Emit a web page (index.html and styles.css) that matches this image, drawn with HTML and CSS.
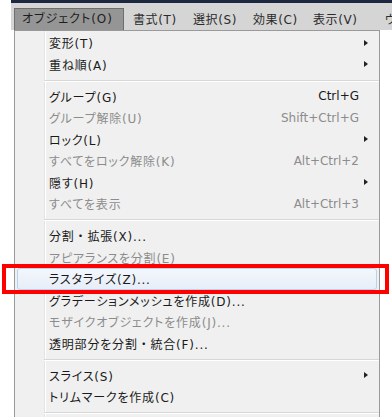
FILE: index.html
```html
<!DOCTYPE html>
<html lang="ja">
<head>
    <meta charset="utf-8">
    <title>オブジェクト メニュー</title>
    <link rel="stylesheet" href="styles.css">
</head>
<body>
    <div class="title_strip"></div>

    <!-- Menu bar -->
    <nav class="menubar">
        <span class="menubar_item is_open">オブジェクト(O)</span>
        <span class="menubar_item">書式(T)</span>
        <span class="menubar_item">選択(S)</span>
        <span class="menubar_item">効果(C)</span>
        <span class="menubar_item">表示(V)</span>
        <span class="menubar_item is_wide">ウィンドウ(W)</span>
    </nav>

    <!-- Dropdown: オブジェクト -->
    <div class="menu">
        <div class="menu_item"><span class="menu_label">変形(T)</span><span class="menu_key"></span><span class="menu_sub"></span></div>
        <div class="menu_item"><span class="menu_label">重ね順(A)</span><span class="menu_key"></span><span class="menu_sub"></span></div>
        <div class="menu_sep"></div>
        <div class="menu_item"><span class="menu_label">グループ(G)</span><span class="menu_key">Ctrl+G</span><span></span></div>
        <div class="menu_item is_disabled"><span class="menu_label">グループ解除(U)</span><span class="menu_key">Shift+Ctrl+G</span><span></span></div>
        <div class="menu_item"><span class="menu_label">ロック(L)</span><span class="menu_key"></span><span class="menu_sub"></span></div>
        <div class="menu_item is_disabled"><span class="menu_label">すべてをロック解除(K)</span><span class="menu_key">Alt+Ctrl+2</span><span></span></div>
        <div class="menu_item"><span class="menu_label">隠す(H)</span><span class="menu_key"></span><span class="menu_sub"></span></div>
        <div class="menu_item is_disabled"><span class="menu_label">すべてを表示</span><span class="menu_key">Alt+Ctrl+3</span><span></span></div>
        <div class="menu_sep"></div>
        <div class="menu_item"><span class="menu_label">分割<span class="dot">・</span>拡張(X)...</span><span class="menu_key"></span><span></span></div>
        <div class="menu_item is_disabled"><span class="menu_label">アピアランスを分割(E)</span><span class="menu_key"></span><span></span></div>
        <div class="menu_item is_hover is_marked"><span class="menu_label">ラスタライズ(Z)...</span><span class="menu_key"></span><span></span></div>
        <div class="menu_item"><span class="menu_label">グラデーションメッシュを作成(D)...</span><span class="menu_key"></span><span></span></div>
        <div class="menu_item is_disabled"><span class="menu_label">モザイクオブジェクトを作成(J)...</span><span class="menu_key"></span><span></span></div>
        <div class="menu_item"><span class="menu_label">透明部分を分割<span class="dot">・</span>統合(F)...</span><span class="menu_key"></span><span></span></div>
        <div class="menu_sep"></div>
        <div class="menu_item"><span class="menu_label">スライス(S)</span><span class="menu_key"></span><span class="menu_sub"></span></div>
        <div class="menu_item"><span class="menu_label">トリムマークを作成(C)</span><span class="menu_key"></span><span></span></div>
        <div class="menu_sep"></div>
    </div>
</body>
</html>
```

FILE: styles.css
```css
/* Base */
html, body {
    margin: 0;
    padding: 0;
    width: 392px;
    height: 417px;
    overflow: hidden;
    background: #ffffff;
    font-family: "DejaVu Sans", "Noto Sans CJK JP", sans-serif;
    font-size: 12px;
    color: #1a1a1a;
}

/* Window title strip */
.title_strip {
    height: 3px;
    margin-left: 11px;
    background: #1d2740;
}

/* Menu bar */
.menubar {
    display: flex;
    align-items: flex-end;
    height: 27px;
    margin-left: 11px;
    padding-left: 3px;
    background: #d5d5d5;
    white-space: nowrap;
    overflow: hidden;
}

.menubar_item {
    flex: none;
    width: 60px;
    box-sizing: border-box;
    padding: 0 0 0 9px;
    height: 20px;
    line-height: 20px;
    font-feature-settings: "palt";
    letter-spacing: 0.6px;
    color: #2b2b2b;
}

.menubar_item.is_wide {
    width: 90px;
    padding-left: 21px;
}

.menubar_item.is_open {
    width: 110px;
    height: 22px;
    padding-left: 7px;
    line-height: 21px;
    letter-spacing: 1px;
    background: #959595;
    border: 1px solid #6e6e6e;
    border-bottom: 0;
    color: #1e1e1e;
}

/* Dropdown menu */
.menu {
    margin-left: 14px;
    width: 366px;
    box-sizing: border-box;
    padding-top: 1px;
    border: 1px solid #9a9a9a;
    border-bottom: 0;
    background:
        linear-gradient(to right, transparent 29px, #e2e3e3 29px, #e2e3e3 30px, #ffffff 30px, #ffffff 31px, transparent 31px),
        #f0f0f0;
    height: 400px;
}

.menu_item {
    position: relative;
    display: grid;
    grid-template-columns: 1fr auto 17px;
    align-items: center;
    height: 21.5px;
    margin: 0 2px;
    padding-left: 31px;
    box-sizing: border-box;
    border: 1px solid transparent;
    border-radius: 3px;
    white-space: nowrap;
}

.menu_label {
    font-feature-settings: "palt";
    letter-spacing: 0.8px;
}

.menu_label .dot {
    font-feature-settings: normal;
}

.menu_key {
    text-align: right;
}

.menu_sub {
    width: 0;
    height: 0;
    margin-left: 5px;
    border-left: 4px solid #222222;
    border-top: 3px solid transparent;
    border-bottom: 3px solid transparent;
}

.menu_item.is_disabled {
    color: #8c8c8c;
}

.menu_item.is_hover {
    border-color: #b4d2f2;
    background: linear-gradient(#f3f7fc, #e7eef8);
}

/* Red annotation box */
.menu_item.is_marked::after {
    content: "";
    position: absolute;
    left: -16px;
    right: -13px;
    top: -5px;
    bottom: -5px;
    border: 4px solid #ff0000;
}

.menu_sep {
    margin: 4.5px 0 4px 29px;
    height: 0;
    border-top: 1px solid #d7d7d7;
    border-bottom: 1px solid #ffffff;
}
```
